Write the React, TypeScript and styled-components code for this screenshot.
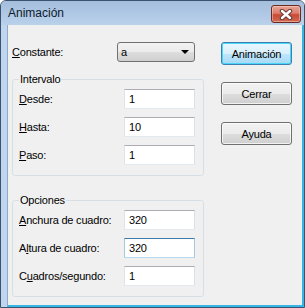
import styled, { createGlobalStyle } from 'styled-components';

const GlobalStyle = createGlobalStyle`
  html, body {
    margin: 0;
    padding: 0;
    background: #ffffff;
  }
  body {
    font-family: "Liberation Sans", Arial, sans-serif;
    font-size: 11px;
    letter-spacing: -0.2px;
    color: #000;
  }
  * {
    box-sizing: border-box;
  }
`;

const intervalo = [
  { key: 'D', rest: 'esde:', value: '1' },
  { key: 'H', rest: 'asta:', value: '10' },
  { key: 'P', rest: 'aso:', value: '1' },
];

const opciones = [
  { pre: '', key: 'A', rest: 'nchura de cuadro:', value: '320', focused: false },
  { pre: 'A', key: 'l', rest: 'tura de cuadro:', value: '320', focused: true },
  { pre: 'C', key: 'u', rest: 'adros/segundo:', value: '1', focused: false },
];

export default function App() {
  return (
    <>
      <GlobalStyle />
      <Window>
        <TitleBar>
          <Title>Animación</Title>
          <CloseButton>
            <svg width="14" height="11" viewBox="0 0 14 11">
              <path d="M3 2 L11 9 M11 2 L3 9" stroke="#6b3a36" strokeWidth="4.4" strokeLinecap="round" />
              <path d="M3 2 L11 9 M11 2 L3 9" stroke="#ffffff" strokeWidth="2.4" strokeLinecap="round" />
            </svg>
          </CloseButton>
        </TitleBar>
        <Frame>
          <Client>
            <LeftColumn>
              <ConstRow>
                <ConstLabel>
                  <u>C</u>onstante:
                </ConstLabel>
                <Combo>
                  <span>a</span>
                  <Arrow />
                </Combo>
              </ConstRow>

              <Group $top={10}>
                <legend>Intervalo</legend>
                <Rows>
                  {intervalo.map((r) => (
                    <Row key={r.key}>
                      <span>
                        <u>{r.key}</u>
                        {r.rest}
                      </span>
                      <Field $focused={false}>{r.value}</Field>
                    </Row>
                  ))}
                </Rows>
              </Group>

              <Group $top={17}>
                <legend>Opciones</legend>
                <Rows>
                  {opciones.map((r) => (
                    <Row key={r.rest}>
                      <span>
                        {r.pre}
                        <u>{r.key}</u>
                        {r.rest}
                      </span>
                      <Field $focused={r.focused}>{r.value}</Field>
                    </Row>
                  ))}
                </Rows>
              </Group>
            </LeftColumn>

            <Buttons>
              <Button $primary>Animación</Button>
              <Button>Cerrar</Button>
              <Button>Ayuda</Button>
            </Buttons>
          </Client>
        </Frame>
      </Window>
    </>
  );
}

const Window = styled.div`
  width: 305px;
  height: 308px;
  display: flex;
  flex-direction: column;
  border: 1px solid #3a5170;
  border-radius: 6px 6px 0 0;
  background: #c0d5ee;
  overflow: hidden;
`;

const TitleBar = styled.div`
  height: 24px;
  flex: none;
  display: flex;
  align-items: flex-start;
  justify-content: space-between;
  padding: 0 3px 0 7px;
  background: linear-gradient(#a4bedc 0%, #adc6e3 45%, #bad1ea 100%);
`;

const Title = styled.div`
  font-size: 12px;
  line-height: 14px;
  letter-spacing: 0;
  margin-top: 5px;
  color: #0d1a2b;
`;

const CloseButton = styled.div`
  width: 30px;
  height: 18px;
  margin-top: 4px;
  display: flex;
  align-items: center;
  justify-content: center;
  border: 1px solid #6a2a22;
  border-radius: 3px;
  background: linear-gradient(#e7a597 0%, #dc7c69 45%, #c84a35 55%, #d06a52 100%);
  box-shadow: inset 0 0 0 1px rgba(255, 220, 210, 0.45);
`;

const Frame = styled.div`
  flex: 1;
  display: flex;
  padding-left: 6px;
`;

const Client = styled.div`
  flex: 1;
  display: flex;
  background: #f0f0f0;
  border-left: 1px solid #8eaacb;
  border-right: 2px solid #35b6e6;
  border-bottom: 2px solid #35b6e6;
  padding: 17px 0 0 4px;
`;

const LeftColumn = styled.div`
  width: 192px;
  display: flex;
  flex-direction: column;
`;

const ConstRow = styled.div`
  display: flex;
  align-items: center;
  height: 20px;
`;

const ConstLabel = styled.span`
  width: 105px;
`;

const Combo = styled.div`
  width: 78px;
  height: 20px;
  display: flex;
  align-items: center;
  justify-content: space-between;
  padding: 0 4px 0 3px;
  border: 1px solid #707070;
  border-radius: 3px;
  background: linear-gradient(#f2f2f2 0%, #ebebeb 50%, #dddddd 51%, #cfcfcf 100%);
`;

const Arrow = styled.span`
  width: 0;
  height: 0;
  border-left: 4px solid transparent;
  border-right: 4px solid transparent;
  border-top: 4px solid #000;
  margin-right: 1px;
`;

const Group = styled.fieldset<{ $top: number }>`
  margin: ${(p) => p.$top}px 0 0;
  padding: 3px 8px 10px 6px;
  border: 1px solid #d5dfe5;
  border-radius: 3px;
  min-width: 0;

  legend {
    padding: 0 1px;
    line-height: 14px;
  }
`;

const Rows = styled.div`
  display: flex;
  flex-direction: column;
  gap: 8px;
`;

const Row = styled.div`
  display: flex;
  align-items: center;
  justify-content: space-between;
  height: 20px;
`;

const Field = styled.div<{ $focused: boolean }>`
  width: 71px;
  height: 20px;
  display: flex;
  align-items: center;
  padding-left: 4px;
  background: #fff;
  border: 1px solid;
  border-color: ${(p) =>
    p.$focused ? '#3d7bad #a4c9e3 #b7d9ed #a4c9e3' : '#abadb3 #dbdfe6 #e3e9ef #e2e3ea'};
`;

const Buttons = styled.div`
  display: flex;
  flex-direction: column;
  gap: 17px;
  margin-left: 17px;
`;

const Button = styled.div<{ $primary?: boolean }>`
  width: 71px;
  height: 23px;
  display: flex;
  align-items: center;
  justify-content: center;
  border-radius: 3px;
  border: 1px solid ${(p) => (p.$primary ? '#3c7fb1' : '#707070')};
  background: ${(p) =>
    p.$primary
      ? 'linear-gradient(#eaf6fd 0%, #d9f0fc 50%, #bee6fd 51%, #a7d9f5 100%)'
      : 'linear-gradient(#f2f2f2 0%, #ebebeb 50%, #dddddd 51%, #cfcfcf 100%)'};
  box-shadow: ${(p) =>
    p.$primary ? 'inset 0 0 0 1px #48d7fb' : 'inset 0 0 0 1px rgba(255,255,255,0.7)'};
`;
